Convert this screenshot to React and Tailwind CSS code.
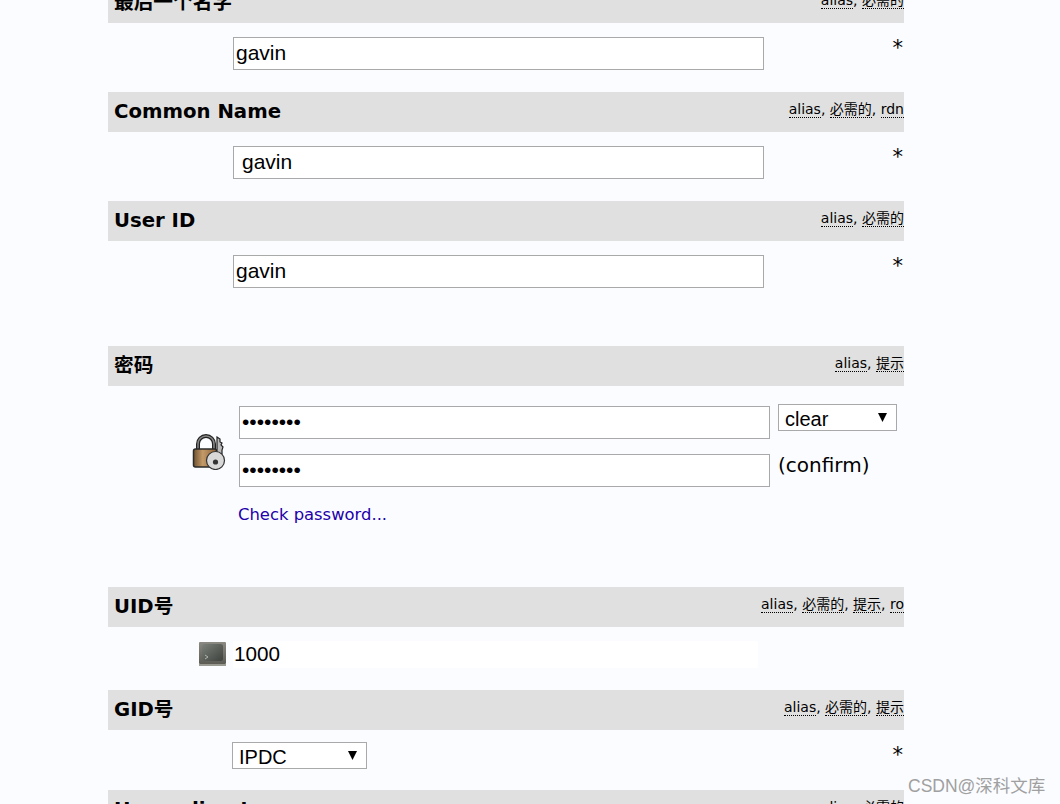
import React from 'react';

const LockIcon = () => (
  <svg width="34" height="36" viewBox="0 0 34 36">
    <defs>
      <linearGradient id="brass" x1="0" y1="0" x2="1" y2="0">
        <stop offset="0" stopColor="#6f5131" />
        <stop offset="0.4" stopColor="#c49a68" />
        <stop offset="1" stopColor="#8a6238" />
      </linearGradient>
    </defs>
    <path d="M6 16v-6a8 8 0 0 1 16 0v6" fill="none" stroke="#222" strokeWidth="4" />
    <path d="M6 16v-6a8 8 0 0 1 16 0v6" fill="none" stroke="#888" strokeWidth="1.5" />
    <rect x="1.5" y="15" width="23" height="18" rx="2" fill="url(#brass)" stroke="#2a2a2a" strokeWidth="1.5" />
    <path d="M25 3l3 2v3l2 1-1 2 2 2-1 3v4h-5z" fill="#bbb" stroke="#222" strokeWidth="1.2" />
    <circle cx="23.5" cy="26.5" r="9" fill="#d8d8d8" stroke="#333" strokeWidth="1.2" />
    <circle cx="23.5" cy="28" r="2.6" fill="#333" />
  </svg>
);

const TermIcon = () => (
  <svg width="27" height="24" viewBox="0 0 27 24">
    <defs>
      <linearGradient id="crt" x1="0" y1="0" x2="1" y2="1">
        <stop offset="0" stopColor="#7b807a" />
        <stop offset="1" stopColor="#3e423e" />
      </linearGradient>
      <linearGradient id="crtcase" x1="0" y1="0" x2="0" y2="1">
        <stop offset="0" stopColor="#8a8a82" />
        <stop offset="1" stopColor="#5c5c55" />
      </linearGradient>
    </defs>
    <rect x="0" y="0" width="27" height="22" rx="1" fill="url(#crtcase)" />
    <rect x="0" y="22" width="27" height="2" fill="#9a9a92" />
    <rect x="3" y="2" width="21" height="17" rx="2.5" fill="url(#crt)" />
    <path d="M6 13l3 2-3 2" fill="none" stroke="#c4c8c2" strokeWidth="0.8" />
  </svg>
);

const Hint = ({ items }) => (
  <div className="flex justify-end whitespace-nowrap text-[14px] text-black overflow-hidden mb-1.5">
    {items.map((t, i) => (
      <span key={i} className="whitespace-pre">
        <span className="border-b border-dotted border-black">{t}</span>
        {i < items.length - 1 ? ', ' : ''}
      </span>
    ))}
  </div>
);

const Header = ({ title, hints }) => (
  <div className="h-10 bg-[#e0e0e0] flex items-center justify-between pl-1.5">
    <span className="font-bold text-[19.7px] leading-6">{title}</span>
    <Hint items={hints} />
  </div>
);

const TextRow = ({ value, pad = 'pl-0.5' }) => (
  <div className="h-[69px] flex items-start pt-3.5 pl-[125px]">
    <input
      readOnly
      value={value}
      className={`w-[531px] h-[33px] bg-white border border-[#a9a9a9] text-[21px] pb-0.5 outline-none ${pad}`}
      style={{ fontFamily: '"Liberation Sans", Arial, sans-serif' }}
    />
    <span className="ml-auto mr-px text-[21px] leading-6 mt-[-1px]">*</span>
  </div>
);

const Select = ({ value, width }) => (
  <div className={`relative h-[27px] ${width}`}>
    <select
      defaultValue={value}
      className="appearance-none w-full h-full bg-white border border-[#a9a9a9] pl-1.5 pt-[3px] text-[20px] leading-none outline-none"
      style={{ fontFamily: '"Liberation Sans", Arial, sans-serif' }}
    >
      <option>{value}</option>
    </select>
    <svg className="absolute right-2.5 top-[9px]" width="9" height="9" viewBox="0 0 9 9">
      <path d="M0 0h9L4.5 9z" fill="#000" />
    </svg>
  </div>
);

const PasswordInput = ({ value }) => (
  <input
    readOnly
    type="password"
    value={value}
    className="w-[531px] h-[33px] bg-white border border-[#a9a9a9] pl-0.5 pb-0.5 text-[21px] outline-none"
    style={{ fontFamily: '"Liberation Sans", Arial, sans-serif' }}
  />
);

const App = () => {
  return (
    <div
      className="relative h-screen overflow-hidden bg-[#fbfcff] text-black pl-[108px]"
      style={{ fontFamily: '"DejaVu Sans", "Noto Sans CJK SC", sans-serif' }}
    >
      <div className="w-[796px] mt-[-17px]">
        <Header title="最后一个名字" hints={['alias', '必需的']} />
        <TextRow value="gavin" />

        <Header title="Common Name" hints={['alias', '必需的', 'rdn']} />
        <TextRow value="gavin" pad="pl-2" />

        <Header title="User ID" hints={['alias', '必需的']} />
        <TextRow value="gavin" />
        <div className="h-9" />

        <Header title="密码" hints={['alias', '提示']} />
        <div className="h-[201px] flex pt-[18px]">
          <div className="w-[118px] shrink-0 flex justify-end pt-[30px]">
            <LockIcon />
          </div>
          <div className="ml-[13px] mt-0.5 flex flex-col gap-[15px]">
            <PasswordInput value="********" />
            <PasswordInput value="********" />
            <a className="text-[16.4px] text-[#2200aa] -ml-px mt-px">Check password...</a>
          </div>
          <div className="ml-2 flex flex-col gap-[22px]">
            <Select value="clear" width="w-[119px]" />
            <span className="text-[20px] leading-6">(confirm)</span>
          </div>
        </div>

        <Header title="UID号" hints={['alias', '必需的', '提示', 'ro']} />
        <div className="h-[63px] flex items-start pt-3.5">
          <div className="w-[118px] shrink-0 flex justify-end pt-px">
            <TermIcon />
          </div>
          <div
            className="ml-[7px] w-[525px] h-[27px] bg-white pl-px text-[20.7px] leading-[25px]"
            style={{ fontFamily: '"Liberation Sans", Arial, sans-serif' }}
          >
            1000
          </div>
        </div>

        <Header title="GID号" hints={['alias', '必需的', '提示']} />
        <div className="h-[60px] flex items-start pt-3 pl-[124px]">
          <Select value="IPDC" width="w-[135px]" />
          <span className="ml-auto mr-px text-[21px] leading-6 mt-px">*</span>
        </div>

        <Header title="Home directory" hints={['alias', '必需的']} />
      </div>

      {/* CSDN watermark */}
      <div
        className="absolute left-[908px] top-[776px] text-[17.5px] leading-5 text-[#a0a0a0] whitespace-nowrap"
        style={{ fontFamily: '"Liberation Sans", "Noto Sans CJK SC", sans-serif' }}
      >
        CSDN@深科文库
      </div>
    </div>
  );
};

export default App;
